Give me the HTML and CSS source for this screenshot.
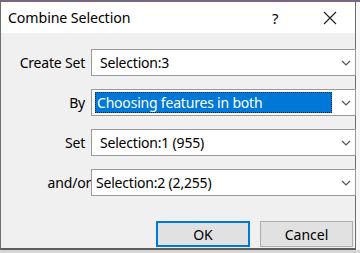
FILE: index.html
```html
<!DOCTYPE html>
<html>
<head>
<meta charset="utf-8">
<link rel="stylesheet" href="styles.css">
</head>
<body>
<div class="screen">
  <div class="topstrip"></div>
  <div class="main">
    <div class="dialog">
      <div class="titlebar">
        <span class="title">Combine Selection</span>
        <span class="help">?</span>
        <span class="close"><svg width="14" height="14" viewBox="0 0 14 14"><path d="M1 1 L13 13 M13 1 L1 13" stroke="#222" stroke-width="1.2" fill="none"/></svg></span>
      </div>
      <div class="body">
        <div class="form">
          <div class="label">Create Set</div>
          <div class="field"><span class="value">Selection:3</span><svg class="chev" width="10" height="6" viewBox="0 0 10 6"><path d="M1 1 L5 5 L9 1" stroke="#555" stroke-width="1.2" fill="none"/></svg></div>
          <div class="label">By</div>
          <div class="field field-focus"><span class="value value-sel">Choosing features in both</span><svg class="chev" width="10" height="6" viewBox="0 0 10 6"><path d="M1 1 L5 5 L9 1" stroke="#555" stroke-width="1.2" fill="none"/></svg></div>
          <div class="label">Set</div>
          <div class="field"><span class="value">Selection:1 (955)</span><svg class="chev" width="10" height="6" viewBox="0 0 10 6"><path d="M1 1 L5 5 L9 1" stroke="#555" stroke-width="1.2" fill="none"/></svg></div>
          <div class="label label-wide">and/or</div>
          <div class="field"><span class="value value-tight">Selection:2 (2,255)</span><svg class="chev" width="10" height="6" viewBox="0 0 10 6"><path d="M1 1 L5 5 L9 1" stroke="#555" stroke-width="1.2" fill="none"/></svg></div>
        </div>
        <div class="buttons">
          <div class="btn btn-default">OK</div>
          <div class="btn">Cancel</div>
        </div>
      </div>
    </div>
    <div class="outside"></div>
  </div>
  <div class="bottomstrip"></div>
</div>
</body>
</html>
```

FILE: styles.css
```css
* { box-sizing: border-box; }
html, body { margin: 0; padding: 0; }
body {
  width: 360px;
  height: 253px;
  overflow: hidden;
  font-family: "Noto Sans", "Open Sans", sans-serif;
  font-size: 14px;
  color: #000;
  background: #d9d9d9;
}
.screen { display: flex; flex-direction: column; width: 360px; height: 253px; }
.topstrip { height: 2px; background: #74677f; }
.main { display: flex; height: 248px; }
.dialog {
  width: 356px;
  height: 248px;
  border-left: 1px solid #6e6e6e;
  border-right: 1px solid #6e6e6e;
  border-bottom: 2px solid #5e5e5e;
  display: flex;
  flex-direction: column;
  background: #f0f0f0;
}
.outside { flex: 1; background: #f7f7f7; }
.bottomstrip { flex: 1; background: #d6d6d6; }
.titlebar {
  height: 31px;
  background: #fff;
  display: flex;
  align-items: center;
  padding-left: 7px;
}
.title { font-size: 14.2px; letter-spacing: -0.1px; flex: 1; }
.help { font-size: 15px; width: 43px; text-align: left; }
.close { width: 40px; display: flex; align-items: center; padding-left: 8px; }
.close svg { display: block; }
.body {
  flex: 1;
  padding: 16px 1px 0 0;
  display: flex;
  flex-direction: column;
}
.form {
  display: grid;
  grid-template-columns: 84px 1fr;
  column-gap: 6px;
  row-gap: 13px;
  grid-auto-rows: 27px;
}
.label {
  display: flex;
  align-items: center;
  justify-content: flex-end;
  letter-spacing: -0.2px;
}
.label-wide { margin-right: -6px; }
.field {
  background: #fff;
  border: 1px solid #9a9a9a;
  display: flex;
  align-items: center;
  padding: 0 4px 0 8px;
}
.value { flex: 1; letter-spacing: -0.2px; white-space: nowrap; }
.value-tight { margin-left: -4px; }
.field-focus { padding-left: 3px; }
.value-sel {
  flex: 0 0 237px;
  height: 21px;
  background: #0078d7;
  color: #fff;
  outline: 1px dotted #0a2350;
  outline-offset: -1px;
  padding-left: 2px;
  line-height: 21px;
  margin-right: 9px;
}
.chev { display: block; flex: 0 0 auto; }
.buttons {
  margin-top: 25px;
  display: flex;
  justify-content: flex-end;
  gap: 10px;
  padding-right: 1px;
}
.btn {
  width: 93px;
  height: 26px;
  background: #e1e1e1;
  border: 1px solid #adadad;
  display: flex;
  align-items: center;
  justify-content: center;
}
.btn-default { width: 94px; border: 2px solid #0078d7; }
```
